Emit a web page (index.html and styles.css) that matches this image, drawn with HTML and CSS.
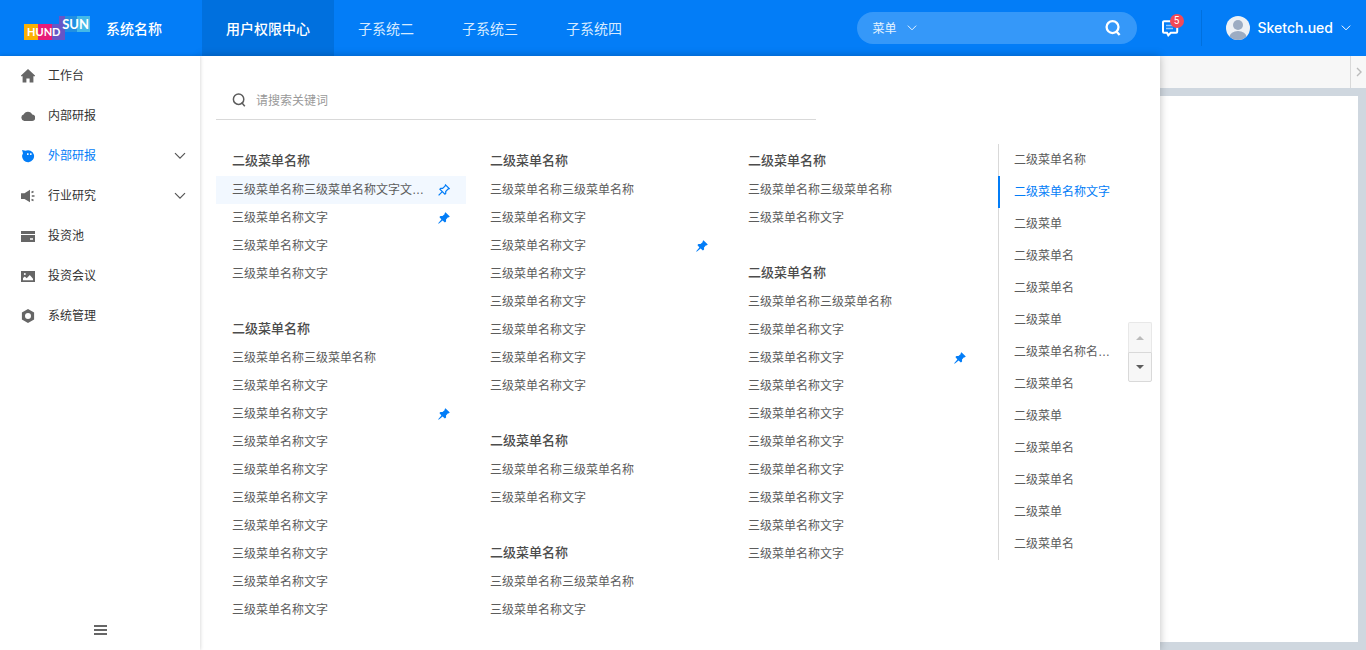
FILE: index.html
```html
<!DOCTYPE html>
<html lang="zh-CN">
<head>
<meta charset="utf-8">
<title>用户权限中心</title>
<link rel="stylesheet" href="styles.css">
</head>
<body>
<svg class="sprite" aria-hidden="true">
  <symbol id="chevron" viewBox="0 0 12 8"><path d="M1 1.200l5 5 5-5" fill="none" stroke="currentColor" stroke-width="1.200"/></symbol>
  <symbol id="search" viewBox="0 0 14 14"><circle cx="6.600" cy="6.200" r="5.200" fill="none" stroke="currentColor" stroke-width="var(--sw)"/><path d="M9.600 9.600l3.200 3.600" stroke="currentColor" stroke-width="var(--sw)"/></symbol>
  <symbol id="pin" viewBox="0 0 12 12"><path d="M7.400.200l4.400 4.300-1.300.9-.5-.1-2 2.200.1 2-1.200 1.100L4.600 8.600 1 11.600.300 11.700.4 11 3.400 7.400 1.400 5.100 2.500 4l2 .1L6.800 2l-.2-.7z" fill="currentColor"/></symbol>
  <symbol id="pin-line" viewBox="0 0 12 12"><path d="M7.500.900l3.700 3.700-1.200.5-2.300 2.400v1.900l-.8.8-5-5 .8-.8h1.900L7 2.100zM4.300 7.700L.600 11.400" fill="none" stroke="currentColor" stroke-width="1.200"/></symbol>
</svg>

<header class="header">
  <div class="logo"><span class="logo-hund">HUND</span><span class="logo-sun">SUN</span></div>
  <strong class="system-name">系统名称</strong>
  <nav class="tabs">
    <a class="tab tab-active" href="#">用户权限中心</a>
    <a class="tab" href="#">子系统二</a>
    <a class="tab" href="#">子系统三</a>
    <a class="tab" href="#">子系统四</a>
  </nav>
  <div class="header-search">
    <button class="scope" type="button">菜单<svg class="chevron-small"><use href="#chevron"/></svg></button>
    <input class="header-input" type="text" aria-label="搜索菜单">
    <button class="icon-button" type="button" aria-label="搜索"><svg class="search-bold"><use href="#search"/></svg></button>
  </div>
  <button class="messages" type="button" aria-label="消息">
    <svg class="message-icon" viewBox="0 0 18 18"><path d="M3 2.200h12.200a1 1 0 0 1 1 1v9.600a1 1 0 0 1-1 1H9.800L7.300 16.300 6 13.800H3a1 1 0 0 1-1-1V3.200a1 1 0 0 1 1-1z" fill="none" stroke="#fff" stroke-width="2"/><path d="M5 6.500h7M5 9.500h7" stroke="#8cc6ff" stroke-width="1.400"/></svg>
    <span class="badge">5</span>
  </button>
  <button class="user" type="button">
    <svg class="avatar" viewBox="0 0 24 24"><defs><clipPath id="disc"><circle cx="12" cy="12" r="12"/></clipPath></defs><g clip-path="url(#disc)"><rect width="24" height="24" fill="#edf1f5"/><circle cx="12" cy="9" r="5" fill="#9cacc2"/><ellipse cx="12" cy="21" rx="8.500" ry="6" fill="#9cacc2"/></g></svg>
    <span>Sketch.ued</span>
    <svg class="chevron-small"><use href="#chevron"/></svg>
  </button>
</header>

<div class="shell">
  <aside class="sidebar">
    <nav class="side-nav">
      <a class="side-item" href="#"><svg class="side-icon" viewBox="0 0 14 14"><path d="M7 0l7 6.500v.8h-1.600V13.500H8.600V9.500H5.400v4H1.600V7.300H0v-.8z"/></svg>工作台</a>
      <a class="side-item" href="#"><svg class="side-icon" viewBox="0 0 14 14"><path d="M3.300 12A3.300 3.300 0 0 1 2.600 5.600 4.700 4.700 0 0 1 11.300 5.600 3.200 3.200 0 0 1 10.800 12z"/></svg>内部研报</a>
      <a class="side-item side-item-active" href="#"><svg class="side-icon" viewBox="0 0 14 14"><path d="M1 1l3.400.8A6 6 0 1 1 1.100 6.600L2 4.300z"/><path d="M6.800 4.300v1.600M9.800 4.300v1.600" stroke="#fff" stroke-width="1.500"/></svg>外部研报<svg class="chevron"><use href="#chevron"/></svg></a>
      <a class="side-item" href="#"><svg class="side-icon" viewBox="0 0 14 14"><path d="M0 4.200h3.500L9 .7v12.600L3.500 10H0z"/><path d="M10.500 3.500l2-1M10.800 7H13.500M10.500 10.500l2 1" stroke="currentColor" stroke-width="1.400"/></svg>行业研究<svg class="chevron"><use href="#chevron"/></svg></a>
      <a class="side-item" href="#"><svg class="side-icon" viewBox="0 0 14 14"><path d="M0 2h14v3H0zM0 6h14v7H0z"/><path d="M9 10h3" stroke="#fff" stroke-width="1.500"/></svg>投资池</a>
      <a class="side-item" href="#"><svg class="side-icon" viewBox="0 0 14 14"><path d="M0 2h14v11H0z"/><path d="M2 11.200V9l1.800-1.500L5.700 9.200 8.800 6 12 9.700v1.500z" fill="#fff"/><circle cx="3.800" cy="5" r="1" fill="#fff"/></svg>投资会议</a>
      <a class="side-item" href="#"><svg class="side-icon" viewBox="0 0 14 14"><path fill-rule="evenodd" d="M7 0l6.100 3.500v7L7 14 .9 10.500v-7zM7 4a3 3 0 1 0 0 6 3 3 0 0 0 0-6z"/></svg>系统管理</a>
    </nav>
    <button class="collapse" type="button" aria-label="收起菜单"><svg class="collapse-icon" viewBox="0 0 13 10"><path d="M0 1h13M0 5h13M0 9h13" stroke="#666" stroke-width="2"/></svg></button>
  </aside>

  <main class="workspace">
    <div class="tab-strip"><button class="strip-next" type="button" aria-label="下一页"><svg class="strip-arrow" viewBox="0 0 6 10"><path d="M1 1l4 4-4 4" fill="none" stroke="#bbb" stroke-width="1.400"/></svg></button></div>
    <div class="canvas"></div>

    <section class="mega">
      <label class="mega-search"><svg class="search-thin"><use href="#search"/></svg><input class="mega-input" type="text" placeholder="请搜索关键词" aria-label="请搜索关键词"></label>
      <div class="mega-body">
        <div class="columns">
          <div class="column">
            <section class="group">
              <h2 class="group-title">二级菜单名称</h2>
              <a class="entry entry-hover" href="#"><span class="entry-text">三级菜单名称三级菜单名称文字文…</span><svg class="pin"><use href="#pin-line"/></svg></a>
              <a class="entry" href="#"><span class="entry-text">三级菜单名称文字</span><svg class="pin"><use href="#pin"/></svg></a>
              <a class="entry" href="#">三级菜单名称文字</a>
              <a class="entry" href="#">三级菜单名称文字</a>
            </section>
            <section class="group">
              <h2 class="group-title">二级菜单名称</h2>
              <a class="entry" href="#">三级菜单名称三级菜单名称</a>
              <a class="entry" href="#">三级菜单名称文字</a>
              <a class="entry" href="#"><span class="entry-text">三级菜单名称文字</span><svg class="pin"><use href="#pin"/></svg></a>
              <a class="entry" href="#">三级菜单名称文字</a>
              <a class="entry" href="#">三级菜单名称文字</a>
              <a class="entry" href="#">三级菜单名称文字</a>
              <a class="entry" href="#">三级菜单名称文字</a>
              <a class="entry" href="#">三级菜单名称文字</a>
              <a class="entry" href="#">三级菜单名称文字</a>
              <a class="entry" href="#">三级菜单名称文字</a>
            </section>
          </div>
          <div class="column">
            <section class="group">
              <h2 class="group-title">二级菜单名称</h2>
              <a class="entry" href="#">三级菜单名称三级菜单名称</a>
              <a class="entry" href="#">三级菜单名称文字</a>
              <a class="entry" href="#"><span class="entry-text">三级菜单名称文字</span><svg class="pin"><use href="#pin"/></svg></a>
              <a class="entry" href="#">三级菜单名称文字</a>
              <a class="entry" href="#">三级菜单名称文字</a>
              <a class="entry" href="#">三级菜单名称文字</a>
              <a class="entry" href="#">三级菜单名称文字</a>
              <a class="entry" href="#">三级菜单名称文字</a>
            </section>
            <section class="group">
              <h2 class="group-title">二级菜单名称</h2>
              <a class="entry" href="#">三级菜单名称三级菜单名称</a>
              <a class="entry" href="#">三级菜单名称文字</a>
            </section>
            <section class="group">
              <h2 class="group-title">二级菜单名称</h2>
              <a class="entry" href="#">三级菜单名称三级菜单名称</a>
              <a class="entry" href="#">三级菜单名称文字</a>
            </section>
          </div>
          <div class="column">
            <section class="group">
              <h2 class="group-title">二级菜单名称</h2>
              <a class="entry" href="#">三级菜单名称三级菜单名称</a>
              <a class="entry" href="#">三级菜单名称文字</a>
            </section>
            <section class="group">
              <h2 class="group-title">二级菜单名称</h2>
              <a class="entry" href="#">三级菜单名称三级菜单名称</a>
              <a class="entry" href="#">三级菜单名称文字</a>
              <a class="entry" href="#"><span class="entry-text">三级菜单名称文字</span><svg class="pin"><use href="#pin"/></svg></a>
              <a class="entry" href="#">三级菜单名称文字</a>
              <a class="entry" href="#">三级菜单名称文字</a>
              <a class="entry" href="#">三级菜单名称文字</a>
              <a class="entry" href="#">三级菜单名称文字</a>
              <a class="entry" href="#">三级菜单名称文字</a>
              <a class="entry" href="#">三级菜单名称文字</a>
              <a class="entry" href="#">三级菜单名称文字</a>
            </section>
          </div>
        </div>
        <div class="index">
          <nav class="anchors">
            <a class="anchor" href="#">二级菜单名称</a>
            <a class="anchor anchor-active" href="#">二级菜单名称文字</a>
            <a class="anchor" href="#">二级菜单</a>
            <a class="anchor" href="#">二级菜单名</a>
            <a class="anchor" href="#">二级菜单名</a>
            <a class="anchor" href="#">二级菜单</a>
            <a class="anchor" href="#">二级菜单名称名…</a>
            <a class="anchor" href="#">二级菜单名</a>
            <a class="anchor" href="#">二级菜单</a>
            <a class="anchor" href="#">二级菜单名</a>
            <a class="anchor" href="#">二级菜单名</a>
            <a class="anchor" href="#">二级菜单</a>
            <a class="anchor" href="#">二级菜单名</a>
          </nav>
          <div class="pager">
            <button class="pager-button" type="button" aria-label="向上" disabled><svg class="caret" viewBox="0 0 8 4"><path d="M0 4l4-4 4 4z"/></svg></button>
            <button class="pager-button" type="button" aria-label="向下"><svg class="caret" viewBox="0 0 8 4"><path d="M0 0l4 4 4-4z"/></svg></button>
          </div>
        </div>
      </div>
    </section>
  </main>
</div>
</body>
</html>
```

FILE: styles.css
```css
* { box-sizing: border-box; }

body {
  margin: 0;
  min-height: 100vh;
  display: flex;
  flex-direction: column;
  overflow: hidden;
  font: 12px/20px "Liberation Sans", "Noto Sans CJK SC", sans-serif;
  color: #333;
}

a { color: inherit; text-decoration: none; }

button, input {
  margin: 0;
  padding: 0;
  border: 0;
  outline: 0;
  background: none;
  font: inherit;
  color: inherit;
}

button { display: flex; align-items: center; justify-content: center; }

svg { display: block; flex: none; }

.sprite { position: absolute; width: 0; height: 0; }

/* Header */
.header {
  display: flex;
  align-items: center;
  height: 56px;
  padding: 0 15px 0 24px;
  background: #037df7;
  color: #fff;
  font-family: "Noto Sans CJK SC", sans-serif;
  font-size: 14px;
}

/* Colour blocks sit behind both words so that neither covers the other */
.logo {
  display: flex;
  justify-content: space-between;
  width: 66px;
  height: 24px;
  background:
    linear-gradient(90deg, #6656c6 0 6px, #208fe2 6px 18px, #43b9e8 18px) right top / 31px 16px no-repeat,
    linear-gradient(90deg, #fbb003 0 14px, #e71b78 14px 28px, #6656c6 28px) left bottom / 41px 16px no-repeat;
  font: 700 13px/16px Lato, sans-serif;
}

.logo-hund { align-self: flex-end; padding-left: 3px; font-size: 11px; }

.logo-sun { align-self: flex-start; padding-right: 1px; }

.system-name { margin-left: 16px; font-weight: 500; }

.tabs { display: flex; align-self: stretch; margin-left: 40px; }

.tab {
  display: flex;
  align-items: center;
  padding: 0 24px;
  color: #d5eaff;
}

.tab-active { background: #0070de; color: #fff; font-weight: 500; }

.header-search {
  display: flex;
  align-items: center;
  width: 280px;
  height: 32px;
  margin-left: auto;
  padding: 0 16px;
  border-radius: 16px;
  background: #3598f9;
  font-size: 12px;
}

.scope { gap: 10px; color: #e4f2ff; }

.header-input { flex: 1; min-width: 0; }

.search-bold { --sw: 2; width: 16px; height: 16px; }

.chevron-small { width: 10px; height: 8px; }

.messages { position: relative; margin-left: 24px; }

.message-icon { width: 18px; height: 18px; }

.badge {
  position: absolute;
  top: -5px;
  right: -5px;
  width: 14px;
  height: 14px;
  border-radius: 7px;
  background: #f24957;
  font: 10px/14px Roboto, sans-serif;
  text-align: center;
}

.user {
  height: 36px;
  gap: 8px;
  margin-left: 22px;
  padding-left: 24px;
  border-left: 1px solid #0070de;
  font-family: Inter, sans-serif;
  font-weight: 500;
}

.avatar { width: 24px; height: 24px; }

/* Page frame */
.shell { display: flex; flex: 1; }

.sidebar {
  position: relative;
  z-index: 2;
  display: flex;
  flex-direction: column;
  justify-content: space-between;
  width: 200px;
  background: #fff;
  box-shadow: 0 0 4px rgba(0, 0, 0, 0.2);
}

.side-item {
  display: flex;
  align-items: center;
  height: 40px;
  padding: 0 14px 0 21px;
}

.side-item-active { color: #037df7; }

.side-icon { width: 14px; height: 14px; margin-right: 13px; color: #666; fill: currentColor; }

.side-item-active .side-icon { color: #037df7; }

.chevron { width: 12px; height: 8px; margin-left: auto; color: #555; }

.collapse { height: 40px; }

.collapse-icon { width: 13px; height: 10px; }

.workspace {
  position: relative;
  display: flex;
  flex: 1;
  flex-direction: column;
  background: #cfd7df;
}

.tab-strip {
  display: flex;
  justify-content: flex-end;
  height: 32px;
  background: #f7f7f7;
}

.strip-next { width: 16px; border-left: 1px solid #d9d9d9; }

.strip-arrow { width: 6px; height: 10px; }

.canvas { flex: 1; margin: 8px; background: #fff; }

/* Menu panel lying over the workspace */
.mega {
  position: absolute;
  inset: 0 206px 0 0;
  padding: 24px 8px 0 16px;
  background: #fff;
  box-shadow: 0 0 8px rgba(0, 0, 0, 0.25);
  color: #5c5c5c;
}

.mega-search {
  display: flex;
  align-items: center;
  gap: 10px;
  max-width: 600px;
  height: 40px;
  padding: 0 16px;
  border-bottom: 1px solid #d9d9d9;
}

.search-thin { --sw: 1.5; width: 14px; height: 14px; }

.mega-input { flex: 1; font-family: "Noto Sans CJK SC", sans-serif; }

.mega-input::placeholder { color: #999; opacity: 1; }

.mega-body { display: flex; align-items: flex-start; margin-top: 24px; }

.columns {
  display: grid;
  flex: 1;
  grid-template-columns: repeat(3, 1fr);
  gap: 8px;
  margin-right: 16px;
}

.column { display: flex; flex-direction: column; gap: 24px; min-width: 0; }

.group-title {
  margin: 0;
  padding: 0 16px;
  font-family: "Noto Sans CJK SC", sans-serif;
  font-size: 13px;
  line-height: 32px;
  font-weight: 500;
  color: #4c4c4c;
}

.entry {
  display: flex;
  align-items: center;
  justify-content: space-between;
  gap: 12px;
  height: 28px;
  padding: 0 16px;
}

.entry-hover { background: #f2f8ff; }

.entry-text { overflow: hidden; text-overflow: ellipsis; white-space: nowrap; }

.pin { width: 12px; height: 12px; color: #037df7; }

.index { display: flex; align-items: center; gap: 8px; }

.anchors {
  width: 122px;
  box-shadow: inset 1px 0 #d9d9d9;
}

.anchor {
  display: block;
  padding: 0 8px 0 14px;
  border-left: 2px solid transparent;
  line-height: 32px;
  overflow: hidden;
  text-overflow: ellipsis;
  white-space: nowrap;
}

.anchor-active { border-color: #037df7; color: #037df7; }

.pager-button {
  width: 24px;
  height: 30px;
  border: 1px solid #d9d9d9;
  border-radius: 0 0 2px 2px;
  background: #f7f7f7;
}

.pager-button:disabled {
  border-color: #e8e8e8;
  border-bottom: 0;
  border-radius: 2px 2px 0 0;
  color: #bbb;
}

.caret { width: 8px; height: 4px; fill: currentColor; }
```
